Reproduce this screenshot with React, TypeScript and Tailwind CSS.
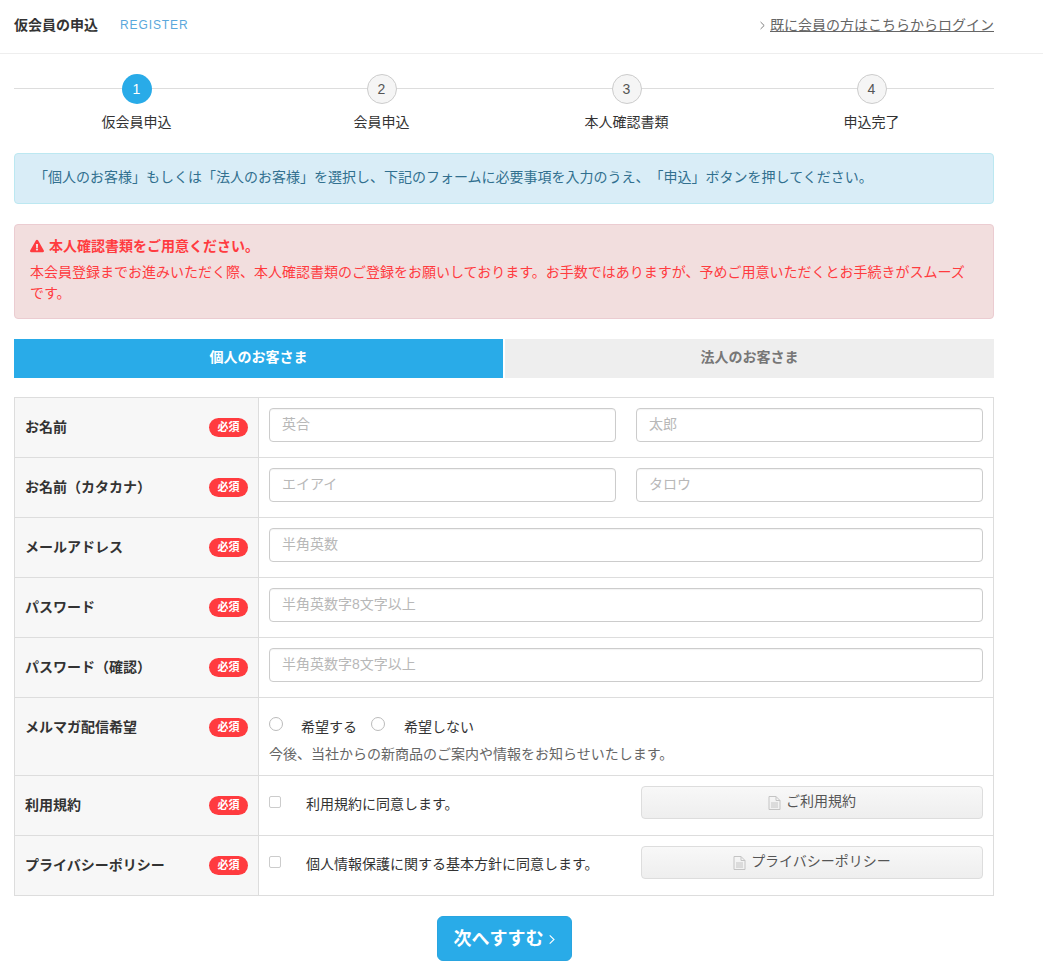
import { FaExclamationTriangle } from "react-icons/fa";
import type { ReactNode } from "react";

const steps = ["仮会員申込", "会員申込", "本人確認書類", "申込完了"];

const inputClass =
  "h-[34px] w-full rounded-[4px] border border-[#ccc] bg-white px-3 pb-[3px] text-sm text-[#333] placeholder:text-[#b8b8b8] shadow-[inset_0_1px_1px_rgba(0,0,0,0.05)] outline-none";

function Row({
  label,
  height = "h-[60px]",
  children,
}: {
  label: string;
  height?: string;
  children: ReactNode;
}) {
  return (
    <div className={`flex border-b border-[#ddd] last:border-b-0 ${height}`}>
      <div className="flex h-full w-[244px] shrink-0 items-start justify-between border-r border-[#ddd] bg-[#f7f7f7] pl-[10px] pr-[10px] pt-[19px]">
        <span className="text-sm leading-[20px] font-bold text-[#333]">{label}</span>
        <span className="mt-[1px] flex h-[19px] w-[39px] items-center justify-center rounded-full bg-[#ff3b3f] text-[11px] font-bold text-white">
          必須
        </span>
      </div>
      <div className="min-w-0 flex-1 px-[10px] pt-[10px]">{children}</div>
    </div>
  );
}

function FileIcon() {
  return (
    <svg viewBox="0 0 13 14" className="mt-[3px] h-[14px] w-[13px]" fill="none" stroke="#c4c4c4" strokeWidth="1">
      <path d="M1 0.5H8L12 4.5V13.5H1Z" />
      <path d="M8 0.5V4.5H12" />
      <path d="M3 7H10M3 9H10M3 11H10" />
    </svg>
  );
}

function DocButton({ label }: { label: string }) {
  return (
    <button
      type="button"
      className="flex h-[33px] w-[342px] shrink-0 items-center justify-center gap-[5px] rounded-[4px] border border-[#ddd] bg-linear-to-b from-[#f8f8f8] to-[#eeeeee] pb-[3px] text-sm text-[#555]"
    >
      <FileIcon />
      {label}
    </button>
  );
}

function AgreeRow({
  label,
  text,
  button,
  height,
}: {
  label: string;
  text: string;
  button: string;
  height?: string;
}) {
  return (
    <Row label={label} height={height}>
      <div className="flex items-start justify-between">
        <label className="flex items-start text-sm text-[#333]">
          <input
            type="checkbox"
            className="mt-[10px] h-3 w-3 appearance-none rounded-[2px] border border-[#ccc] bg-white"
          />
          <span className="ml-[25px] mt-[8px] leading-[20px]">{text}</span>
        </label>
        <DocButton label={button} />
      </div>
    </Row>
  );
}

export default function App() {
  return (
    <div className="min-h-[976px] w-[1043px] bg-white pb-[15px] font-['Liberation_Sans','Noto_Sans_CJK_JP',sans-serif] text-sm text-[#333] [text-spacing-trim:space-all]">
      {/* ヘッダー */}
      <header className="h-[54px] border-b border-[#eee]">
        <div className="ml-[14px] flex h-[50px] w-[980px] items-center justify-between">
          <div className="flex items-center">
            <h1 className="text-sm font-bold text-[#333]">仮会員の申込</h1>
            <span className="ml-[22px] text-xs tracking-[0.9px] text-[#5aa8dc]">REGISTER</span>
          </div>
          <div className="flex items-center text-sm text-[#666]">
            <svg viewBox="0 0 6 10" className="mr-[5px] h-[9px] w-[5px]" fill="none" stroke="#666" strokeWidth="1">
              <path d="M0.7 0.8 5 5 0.7 9.2" />
            </svg>
            <a href="#" className="underline">
              既に会員の方はこちらからログイン
            </a>
          </div>
        </div>
      </header>

      <main className="ml-[14px] w-[980px]">
        {/* ステップ */}
        <ol className="relative mt-[20px] grid grid-cols-4">
          <div className="absolute left-0 right-0 top-[14px] h-px bg-[#ddd]" />
          {steps.map((step, i) => (
            <li key={step} className="relative flex flex-col items-center">
              <span
                className={
                  i === 0
                    ? "flex h-[30px] w-[30px] items-center justify-center rounded-full bg-[#29abe8] text-sm text-white"
                    : "flex h-[30px] w-[30px] items-center justify-center rounded-full border border-[#ccc] bg-[#f5f5f5] text-sm text-[#555]"
                }
              >
                {i + 1}
              </span>
              <span className="mt-[8px] text-sm leading-[20px] text-[#333]">{step}</span>
            </li>
          ))}
        </ol>

        {/* お知らせ */}
        <p className="mt-[21px] flex h-[51px] items-center rounded-[4px] border border-[#bce8f1] bg-[#d9edf7] pb-[4px] pl-[19px] text-sm text-[#31708f]">
          「個人のお客様」もしくは「法人のお客様」を選択し、下記のフォームに必要事項を入力のうえ、「申込」ボタンを押してください。
        </p>

        <div className="mt-5 h-[95px] rounded-[4px] border border-[#ebccd1] bg-[#f2dede] px-[15px] pt-[11px] text-sm text-[#ff3b3f]">
          <p className="flex items-center font-bold leading-[20px]">
            <FaExclamationTriangle className="mr-[5px] h-[14px] w-[14px]" />
            本人確認書類をご用意ください。
          </p>
          <p className="mt-[6px] leading-[21px]">
            本会員登録までお進みいただく際、本人確認書類のご登録をお願いしております。お手数ではありますが、予めご用意いただくとお手続きがスムーズです。
          </p>
        </div>

        {/* タブ */}
        <div className="mt-5 flex gap-[2px]">
          <button type="button" className="h-[39px] flex-1 bg-[#29abe8] pb-[4px] text-sm font-bold text-white">
            個人のお客さま
          </button>
          <button type="button" className="h-[39px] flex-1 bg-[#eeeeee] pb-[4px] text-sm font-bold text-[#777]">
            法人のお客さま
          </button>
        </div>

        {/* フォーム */}
        <form className="mt-[19px] border border-[#ddd]">
          <Row label="お名前">
            <div className="flex gap-5">
              <input className={inputClass} placeholder="英合" />
              <input className={inputClass} placeholder="太郎" />
            </div>
          </Row>
          <Row label="お名前（カタカナ）">
            <div className="flex gap-5">
              <input className={inputClass} placeholder="エイアイ" />
              <input className={inputClass} placeholder="タロウ" />
            </div>
          </Row>
          <Row label="メールアドレス">
            <input className={inputClass} placeholder="半角英数" />
          </Row>
          <Row label="パスワード">
            <input type="text" className={inputClass} placeholder="半角英数字8文字以上" />
          </Row>
          <Row label="パスワード（確認）">
            <input type="text" className={inputClass} placeholder="半角英数字8文字以上" />
          </Row>
          <Row label="メルマガ配信希望" height="h-[78px]">
            <div className="flex items-start pt-[9px] leading-[20px]">
              <input type="radio" name="mail" className="h-[14px] w-[14px] appearance-none rounded-full border border-[#bbb] bg-white" />
              <span className="ml-[18px]">希望する</span>
              <input type="radio" name="mail" className="ml-[14px] h-[14px] w-[14px] appearance-none rounded-full border border-[#bbb] bg-white" />
              <span className="ml-[19px]">希望しない</span>
            </div>
            <p className="mt-[7px] leading-[20px] text-[#666]">今後、当社からの新商品のご案内や情報をお知らせいたします。</p>
          </Row>
          <AgreeRow label="利用規約" text="利用規約に同意します。" button="ご利用規約" />
          <AgreeRow
            label="プライバシーポリシー"
            text="個人情報保護に関する基本方針に同意します。"
            button="プライバシーポリシー"
            height="h-[59px]"
          />
        </form>

        <div className="mt-5 flex justify-center">
          <button
            type="submit"
            className="flex h-[45px] w-[135px] items-center justify-center gap-[5px] rounded-[6px] border border-[#29a5e0] bg-[#29abe8] text-lg font-bold text-white"
          >
            次へすすむ
            <svg viewBox="0 0 6 10" className="mt-[2px] h-[11px] w-[6px]" fill="none" stroke="#fff" strokeWidth="1.1">
              <path d="M0.7 0.8 5 5 0.7 9.2" />
            </svg>
          </button>
        </div>
      </main>
    </div>
  );
}
